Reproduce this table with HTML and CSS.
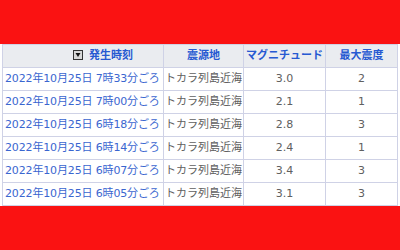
FILE: index.html
```html
<!DOCTYPE html>
<html lang="ja">
<head>
<meta charset="utf-8">
<link rel="stylesheet" href="styles.css">
</head>
<body>
<div class="band"></div>
<div class="wrap">
<table class="quakes">
<colgroup>
<col class="w-time">
<col class="w-place">
<col class="w-mag">
<col class="w-int">
</colgroup>
<thead>
<tr>
<th class="c-time"><span class="sort"><svg width="10" height="10" viewBox="0 0 10 10"><rect x="0.5" y="0.5" width="9" height="9" fill="#d8d8d8" stroke="#333"/><polygon points="2.5,3 7.5,3 5,7" fill="#111"/></svg></span><a>発生時刻</a></th>
<th class="c-place"><a>震源地</a></th>
<th class="c-mag"><a>マグニチュード</a></th>
<th class="c-int"><a>最大震度</a></th>
</tr>
</thead>
<tbody>
<tr><td class="c-time"><a>2022年10月25日 7時33分ごろ</a></td><td class="c-place">トカラ列島近海</td><td class="c-mag">3.0</td><td class="c-int">2</td></tr>
<tr><td class="c-time"><a>2022年10月25日 7時00分ごろ</a></td><td class="c-place">トカラ列島近海</td><td class="c-mag">2.1</td><td class="c-int">1</td></tr>
<tr><td class="c-time"><a>2022年10月25日 6時18分ごろ</a></td><td class="c-place">トカラ列島近海</td><td class="c-mag">2.8</td><td class="c-int">3</td></tr>
<tr><td class="c-time"><a>2022年10月25日 6時14分ごろ</a></td><td class="c-place">トカラ列島近海</td><td class="c-mag">2.4</td><td class="c-int">1</td></tr>
<tr><td class="c-time"><a>2022年10月25日 6時07分ごろ</a></td><td class="c-place">トカラ列島近海</td><td class="c-mag">3.4</td><td class="c-int">3</td></tr>
<tr><td class="c-time"><a>2022年10月25日 6時05分ごろ</a></td><td class="c-place">トカラ列島近海</td><td class="c-mag">3.1</td><td class="c-int">3</td></tr>
</tbody>
</table>
</div>
<div class="band band-bottom"></div>
</body>
</html>
```
FILE: styles.css
```css
html, body {
  margin: 0;
  padding: 0;
  background: #ffffff;
  width: 400px;
  height: 250px;
  overflow: hidden;
}
body {
  font-family: "DejaVu Sans", "Noto Sans CJK JP", sans-serif;
  font-size: 11px;
  color: #606060;
}
.band {
  height: 44px;
  background: #fa1212;
}
.band-bottom {
  height: 50px;
}
.wrap {
  padding: 0 3px 0 2px;
}
.quakes {
  width: 395px;
  border-collapse: collapse;
  table-layout: fixed;
}
.w-time { width: 161px; }
.w-place { width: 80px; }
.w-mag { width: 82px; }
.w-int { width: 72px; }
.quakes th, .quakes td {
  border: 1px solid #cfd2e6;
  height: 22px;
  padding: 0 1px;
  white-space: nowrap;
  overflow: hidden;
  line-height: 22px;
}
.quakes th {
  background: #eaecf0;
  font-weight: bold;
  text-align: center;
}
.quakes a {
  color: #3a66d0;
}
.quakes th a {
  color: #2659d2;
}
th.c-time { text-align: left; padding-left: 70px; }
td.c-time { padding-left: 2px; letter-spacing: -0.15px; }
td.c-place { padding-left: 1px; }
td.c-mag, td.c-int { text-align: center; }
.sort {
  display: inline-block;
  width: 10px;
  height: 10px;
  margin-right: 6px;
  vertical-align: -1px;
}
.sort svg { display: block; }
```
